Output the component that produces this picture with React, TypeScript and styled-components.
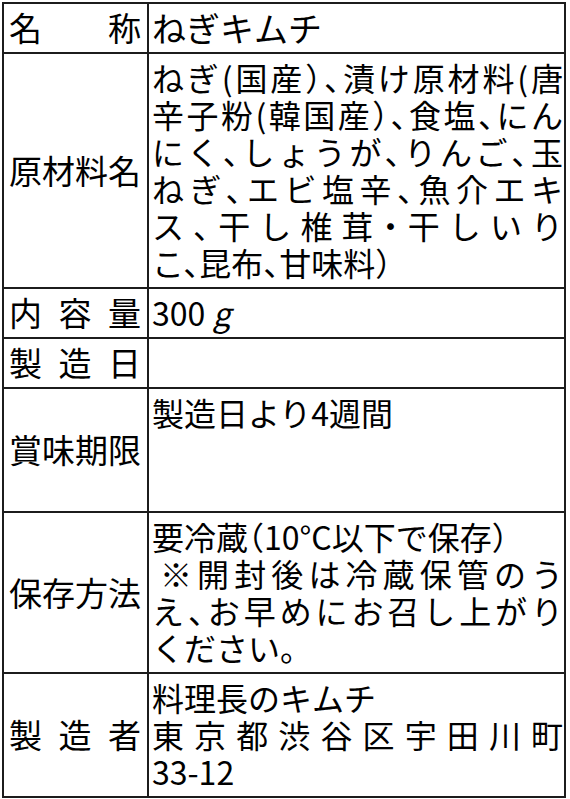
import styled, { createGlobalStyle } from "styled-components";

const LINE = 37;
const INK = "#1c1c1c";

const GlobalStyle = createGlobalStyle`
  html, body {
    margin: 0;
    padding: 0;
    background: #fff;
  }
  body {
    font-family: "Noto Sans CJK JP", "Noto Sans", sans-serif;
    color: #000;
  }
`;

const Table = styled.div`
  box-sizing: border-box;
  width: 564px;
  margin: 2px 0 0 2px;
  border: 2px solid ${INK};
`;

const Row = styled.div`
  display: grid;
  grid-template-columns: 145px 1fr;

  & + & {
    border-top: 2px solid ${INK};
  }
`;

const Label = styled.div`
  box-sizing: border-box;
  display: flex;
  align-items: center;
  padding: 5px 6px 6px 5px;
  border-right: 2px solid ${INK};
  font-size: 33px;
  line-height: ${LINE}px;
`;

const LabelText = styled.span`
  flex: 1;
  white-space: nowrap;
  text-align: justify;
  text-align-last: justify;
  text-justify: inter-character;
`;

const Value = styled.div<{ $size?: number; $lines?: number; $tight?: boolean }>`
  box-sizing: border-box;
  padding: 5px 1px 6px 3px;
  font-size: ${(p) => p.$size ?? 32}px;
  line-height: ${LINE}px;
  font-feature-settings: ${(p) => (p.$tight ? '"halt" 1' : "normal")};
  min-height: ${(p) => (p.$lines ?? 1) * LINE + 11}px;
`;

const Line = styled.span<{ $fill?: boolean; $indent?: boolean }>`
  display: block;
  white-space: nowrap;
  text-align: left;
  text-align-last: ${(p) => (p.$fill ? "justify" : "auto")};
  text-justify: inter-character;
  text-indent: ${(p) => (p.$indent ? "8px" : "0")};
`;

const Unit = styled.i`
  font-style: italic;
`;

const ingredients = [
  "ねぎ(国産）、漬け原材料(唐",
  "辛子粉(韓国産）、食塩、にん",
  "にく、しょうが、りんご、玉",
  "ねぎ、エビ塩辛、魚介エキ",
  "ス、干し椎茸・干しいり",
  "こ、昆布、甘味料）",
];

const storage = [
  "要冷蔵（10°C以下で保存）",
  "※開封後は冷蔵保管のう",
  "え、お早めにお召し上がり",
  "ください。",
];

const maker = ["料理長のキムチ", "東京都渋谷区宇田川町", "33-12"];

function Lines({ items, breaks }: { items: string[]; breaks?: number[] }) {
  return (
    <>
      {items.map((text, i) => {
        const last = i === items.length - 1 || breaks?.includes(i);
        return (
          <Line key={i} $fill={!last} $indent={text.startsWith("※")}>
            {text}
          </Line>
        );
      })}
    </>
  );
}

export default function App() {
  return (
    <>
      <GlobalStyle />
      <Table lang="ja">
        <Row>
          <Label>
            <LabelText>名称</LabelText>
          </Label>
          <Value $size={34}>ねぎキムチ</Value>
        </Row>
        <Row>
          <Label>
            <LabelText>原材料名</LabelText>
          </Label>
          <Value $lines={6} $tight>
            <Lines items={ingredients} />
          </Value>
        </Row>
        <Row>
          <Label>
            <LabelText>内容量</LabelText>
          </Label>
          <Value>
            300 <Unit>g</Unit>
          </Value>
        </Row>
        <Row>
          <Label>
            <LabelText>製造日</LabelText>
          </Label>
          <Value />
        </Row>
        <Row>
          <Label>
            <LabelText>賞味期限</LabelText>
          </Label>
          <Value $lines={3}>製造日より4週間</Value>
        </Row>
        <Row>
          <Label>
            <LabelText>保存方法</LabelText>
          </Label>
          <Value $lines={4} $tight>
            <Lines items={storage} breaks={[0]} />
          </Value>
        </Row>
        <Row>
          <Label>
            <LabelText>製造者</LabelText>
          </Label>
          <Value $lines={3}>
            <Lines items={maker} breaks={[0]} />
          </Value>
        </Row>
      </Table>
    </>
  );
}
